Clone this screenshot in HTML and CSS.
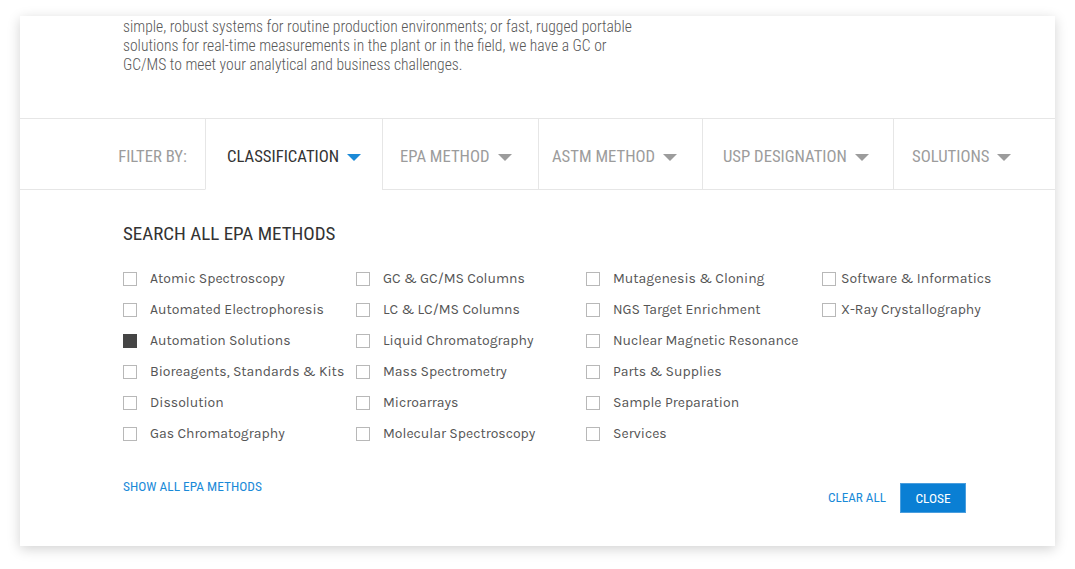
FILE: index.html
```html
<!DOCTYPE html>
<html lang="en">
<head>
<meta charset="utf-8">
<title>Filter</title>
<link rel="stylesheet" href="styles.css">
</head>
<body>
<div class="card">
  <div class="intro">
    <p>simple, robust systems for routine production environments; or fast, rugged portable<br>solutions for real-time measurements in the plant or in the field, we have a GC or<br>GC/MS to meet your analytical and business challenges.</p>
  </div>
  <div class="filterbar">
    <div class="filter-label">FILTER BY:</div>
    <div class="tab tab-1 active">CLASSIFICATION <span class="caret"></span></div>
    <div class="tab tab-2">EPA METHOD <span class="caret"></span></div>
    <div class="tab tab-3">ASTM METHOD <span class="caret"></span></div>
    <div class="tab tab-4">USP DESIGNATION <span class="caret"></span></div>
    <div class="tab tab-5">SOLUTIONS <span class="caret"></span></div>
  </div>
  <div class="panel">
    <h2 class="panel-title">SEARCH ALL EPA METHODS</h2>
    <div class="options">
      <label class="opt"><span class="box"></span>Atomic Spectroscopy</label>
      <label class="opt"><span class="box"></span>Automated Electrophoresis</label>
      <label class="opt"><span class="box checked"></span>Automation Solutions</label>
      <label class="opt"><span class="box"></span>Bioreagents, Standards &amp; Kits</label>
      <label class="opt"><span class="box"></span>Dissolution</label>
      <label class="opt"><span class="box"></span>Gas Chromatography</label>
      <label class="opt"><span class="box"></span>GC &amp; GC/MS Columns</label>
      <label class="opt"><span class="box"></span>LC &amp; LC/MS Columns</label>
      <label class="opt"><span class="box"></span>Liquid Chromatography</label>
      <label class="opt"><span class="box"></span>Mass Spectrometry</label>
      <label class="opt"><span class="box"></span>Microarrays</label>
      <label class="opt"><span class="box"></span>Molecular Spectroscopy</label>
      <label class="opt"><span class="box"></span>Mutagenesis &amp; Cloning</label>
      <label class="opt"><span class="box"></span>NGS Target Enrichment</label>
      <label class="opt"><span class="box"></span>Nuclear Magnetic Resonance</label>
      <label class="opt"><span class="box"></span>Parts &amp; Supplies</label>
      <label class="opt"><span class="box"></span>Sample Preparation</label>
      <label class="opt"><span class="box"></span>Services</label>
      <label class="opt tight"><span class="box"></span>Software &amp; Informatics</label>
      <label class="opt tight"><span class="box"></span>X-Ray Crystallography</label>
    </div>
    <div class="footer">
      <a class="show-all" href="#">SHOW ALL EPA METHODS</a>
      <div class="actions">
        <a class="clear-all" href="#">CLEAR ALL</a>
        <button class="close-btn" type="button">CLOSE</button>
      </div>
    </div>
  </div>
</div>
</body>
</html>
```
FILE: styles.css
```css
* { box-sizing: border-box; }
html, body { margin: 0; padding: 0; background: #ffffff; }
body {
  padding: 16px 20px 23px;
  font-family: "Roboto Condensed", "Liberation Sans Narrow", "Roboto", sans-serif;
  color: #333;
}

.card {
  height: 530px;
  background: #fff;
  box-shadow: 0 3px 12px rgba(0, 0, 0, 0.18);
  display: flex;
  flex-direction: column;
}

.intro { height: 102px; padding-left: 103px; }
.intro p {
  margin: 0;
  padding-top: 2px;
  font-size: 15.6px;
  font-weight: 300;
  line-height: 19px;
  color: #585858;
  white-space: nowrap;
}

.filterbar {
  display: flex;
  height: 72px;
  border-top: 1px solid #e6e6e6;
}
.filter-label, .tab {
  display: flex;
  align-items: center;
  padding-top: 5px;
  border-bottom: 1px solid #e6e6e6;
  font-size: 16.7px;
  color: #9c9c9c;
  white-space: nowrap;
}
.filter-label { width: 185px; justify-content: flex-end; padding-right: 18px; }
.tab { border-left: 1px solid #e6e6e6; }
.tab-1 { width: 177px; padding-left: 21px; }
.tab-2 { width: 156px; padding-left: 17px; }
.tab-3 { width: 164px; padding-left: 13px; }
.tab-4 { width: 191px; padding-left: 20px; }
.tab-5 { flex: 1; padding-left: 18px; }
.tab.active { color: #333; border-bottom-color: transparent; }
.caret {
  display: inline-block;
  width: 0; height: 0;
  margin-left: 8px;
  margin-top: 1px;
  border-left: 7px solid transparent;
  border-right: 7px solid transparent;
  border-top: 7px solid #9c9c9c;
}
.tab.active .caret { border-top-color: #1b8ad7; }

.panel { flex: 1; padding: 32px 0 0 103px; }
.panel-title {
  margin: 0;
  font-size: 19px;
  font-weight: 400;
  line-height: 24px;
  color: #333;
}
.options {
  margin-top: 17px;
  display: grid;
  grid-template-columns: 233px 230px 236px auto;
  grid-template-rows: repeat(6, 31px);
  grid-auto-flow: column;
}
.opt {
  display: flex;
  align-items: center;
  font-family: "Karla", "Noto Sans", sans-serif;
  font-size: 14px;
  color: #555;
  white-space: nowrap;
}
.box {
  width: 14px; height: 14px;
  border: 1px solid #b8b8b8;
  background: #fff;
  margin-right: 13px;
  flex: none;
}
.opt.tight .box { margin-right: 5px; }
.box.checked { background: #454545; border-color: #454545; }

.footer {
  margin-top: 30px;
  display: flex;
  justify-content: space-between;
  align-items: flex-start;
  padding-right: 89px;
}
.show-all, .clear-all {
  font-size: 13.4px;
  line-height: 16px;
  color: #1a8ad8;
  text-decoration: none;
}
.actions { display: flex; align-items: center; margin-top: 4px; }
.clear-all { margin-right: 14px; font-size: 13.2px; }
.close-btn {
  width: 66px; height: 30px;
  background: #0a7fd4;
  border: 1px solid #4a9ede;
  color: #fff;
  font-family: "Roboto Condensed", "Liberation Sans Narrow", sans-serif;
  font-size: 13.4px;
  padding: 0;
}
```
